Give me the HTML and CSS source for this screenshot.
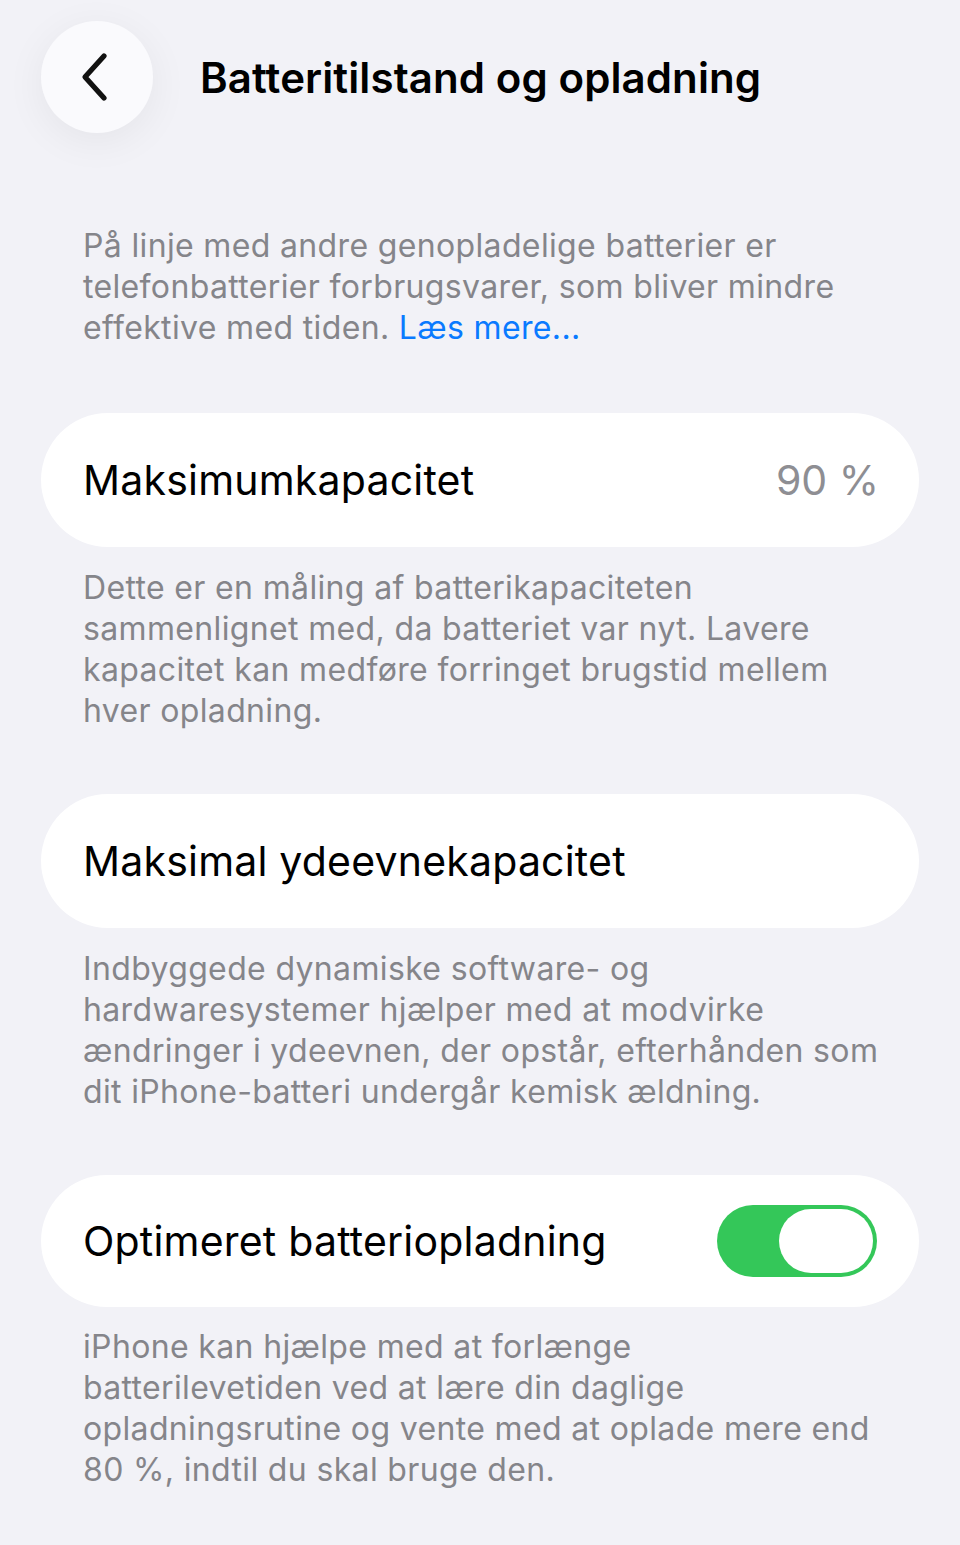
FILE: index.html
```html
<!DOCTYPE html>
<html lang="da">
<head>
<meta charset="utf-8">
<link rel="stylesheet" href="styles.css">
</head>
<body>
<div class="page">
  <header class="nav">
    <button class="back" aria-label="Tilbage">
      <svg width="34" height="50" viewBox="0 0 34 50"><path d="M27 4 L8 25 L27 46" fill="none" stroke="#111" stroke-width="5.2" stroke-linecap="round" stroke-linejoin="round"/></svg>
    </button>
    <h1 class="title">Batteritilstand og opladning</h1>
  </header>

  <p class="note intro">På linje med andre genopladelige batterier er<br>telefonbatterier forbrugsvarer, som bliver mindre<br>effektive med tiden. <a class="link" href="#">Læs mere...</a></p>

  <div class="card">
    <span class="label">Maksimumkapacitet</span>
    <span class="value">90 %</span>
  </div>
  <p class="note">Dette er en måling af batterikapaciteten<br>sammenlignet med, da batteriet var nyt. Lavere<br>kapacitet kan medføre forringet brugstid mellem<br>hver opladning.</p>

  <div class="card">
    <span class="label">Maksimal ydeevnekapacitet</span>
  </div>
  <p class="note">Indbyggede dynamiske software- og<br>hardwaresystemer hjælper med at modvirke<br>ændringer i ydeevnen, der opstår, efterhånden som<br>dit iPhone-batteri undergår kemisk ældning.</p>

  <div class="card card-toggle">
    <span class="label">Optimeret batteriopladning</span>
    <span class="toggle"><span class="knob"></span></span>
  </div>
  <p class="note">iPhone kan hjælpe med at forlænge<br>batterilevetiden ved at lære din daglige<br>opladningsrutine og vente med at oplade mere end<br>80 %, indtil du skal bruge den.</p>
</div>
</body>
</html>
```

FILE: styles.css
```css
html, body {
  margin: 0;
  padding: 0;
  background: #f2f2f7;
}
body {
  font-family: Inter, "Noto Sans", "Liberation Sans", sans-serif;
  color: #000;
}
.page {
  padding: 21px 41px 40px 41px;
  display: flex;
  flex-direction: column;
}
.nav {
  display: flex;
  align-items: center;
  gap: 47px;
  height: 112px;
}
.back {
  width: 112px;
  height: 112px;
  border-radius: 50%;
  border: none;
  background: #fafafd;
  box-shadow: 0 8px 40px rgba(0,0,0,0.06);
  display: flex;
  align-items: center;
  justify-content: center;
  padding: 0 6px 0 0;
  flex: none;
}
.title {
  margin: 0;
  font-size: 42px;
  font-weight: 600;
  letter-spacing: 0.1px;
}
.note {
  margin: 0;
  padding: 0 30px 0 42px;
  font-size: 32px;
  line-height: 41px;
  color: #85858a;
  letter-spacing: 0.35px;
  white-space: nowrap;
}
.intro {
  margin-top: 92px;
  margin-bottom: 65px;
}
.link {
  color: #0a7aff;
  text-decoration: none;
}
.card {
  height: 134px;
  border-radius: 67px;
  background: #fff;
  display: flex;
  align-items: center;
  justify-content: space-between;
  padding: 0 40px 0 42px;
  margin-bottom: 20px;
}
.card-toggle {
  height: 132px;
  margin-bottom: 19px;
}
.card + .note {
  margin-bottom: 63px;
}
.label {
  font-size: 41px;
  letter-spacing: 0.2px;
}
.value {
  font-size: 41px;
  color: #8e8e93;
  letter-spacing: 0;
}
.toggle {
  width: 160px;
  height: 72px;
  border-radius: 36px;
  background: #34c759;
  display: flex;
  align-items: center;
  justify-content: flex-end;
  padding: 0 4px;
  box-sizing: border-box;
  margin-right: 2px;
}
.knob {
  width: 94px;
  height: 64px;
  border-radius: 32px;
  background: #fff;
}
```
